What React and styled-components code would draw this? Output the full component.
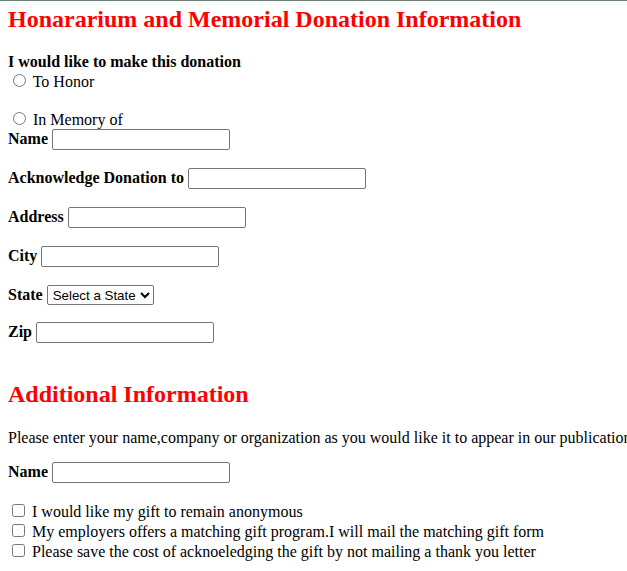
import styled, { createGlobalStyle } from "styled-components";

const GlobalStyle = createGlobalStyle`
  html, body {
    margin: 0;
    padding: 0;
    overflow: hidden;
  }
  body {
    font-family: "Liberation Serif", "Times New Roman", serif;
    font-size: 16px;
    color: #000;
    background: #fff;
    border-top: 1px solid #6d8076;
  }
`;

const Page = styled.form`
  padding: 0 8px;
  white-space: nowrap;
`;

const Heading = styled.h2`
  margin: ${(p) => p.$top || 0}px 0 ${(p) => p.$bottom ?? 20}px;
  font-size: 24px;
  font-weight: bold;
  color: #ff0000;
`;

const Prompt = styled.div`
  font-weight: bold;
`;

const Choice = styled.label`
  display: block;
  margin-bottom: ${(p) => p.$gap || 0}px;

  input {
    margin: 3px 3px 0 5px;
  }
`;

const Row = styled.div`
  display: flex;
  align-items: baseline;
  gap: 4px;
  margin-bottom: ${(p) => p.$gap ?? 18}px;
`;

const Label = styled.b`
  font-weight: bold;
`;

const TextInput = styled.input.attrs({ type: "text" })`
  box-sizing: border-box;
  font-family: "Liberation Sans", Arial, sans-serif;
  font-size: 13.333px;
  width: 178px;
  height: 21px;
  padding: 1px 2px;
  border: 1px solid #767676;
  border-radius: 2px;
`;

const StateSelect = styled.select`
  box-sizing: border-box;
  width: 107px;
  height: 20px;
  padding: 0 1px;
  font-family: "Liberation Sans", Arial, sans-serif;
  font-size: 13.333px;
  color: #000;
  background: #fff;
  border: 1px solid #767676;
  border-radius: 2px;
`;

const Note = styled.p`
  margin: 0 0 15px;
`;

const Checks = styled.div`
  margin-top: 12px;
`;

const Check = styled.label`
  display: block;

  input {
    margin: 3px 3px 3px 4px;
  }
`;

const fields = ["Acknowledge Donation to", "Address", "City"];

export default function App() {
  return (
    <>
      <GlobalStyle />
      <Page>
        <Heading $top={5}>Honararium and Memorial Donation Information</Heading>
        <Prompt>I would like to make this donation</Prompt>
        <Choice $gap={18}>
          <input type="radio" name="kind" /> To Honor
        </Choice>
        <Choice>
          <input type="radio" name="kind" /> In Memory of
        </Choice>
        <Row>
          <Label>Name</Label>
          <TextInput />
        </Row>
        {fields.map((f) => (
          <Row key={f}>
            <Label>{f}</Label>
            <TextInput />
          </Row>
        ))}
        <Row $gap={17}>
          <Label>State</Label>
          <StateSelect defaultValue="">
            <option value="">Select a State</option>
          </StateSelect>
        </Row>
        <Row>
          <Label>Zip</Label>
          <TextInput />
        </Row>
        <Heading $top={38} $bottom={21}>Additional Information</Heading>
        <Note>
          Please enter your name,company or organization as you would like it to appear in our publications
        </Note>
        <Row>
          <Label>Name</Label>
          <TextInput />
        </Row>
        <Checks>
          <Check>
            <input type="checkbox" /> I would like my gift to remain anonymous
          </Check>
          <Check>
            <input type="checkbox" /> My employers offers a matching gift program.I will mail the matching gift form
          </Check>
          <Check>
            <input type="checkbox" /> Please save the cost of acknoeledging the gift by not mailing a thank you letter
          </Check>
        </Checks>
      </Page>
    </>
  );
}
